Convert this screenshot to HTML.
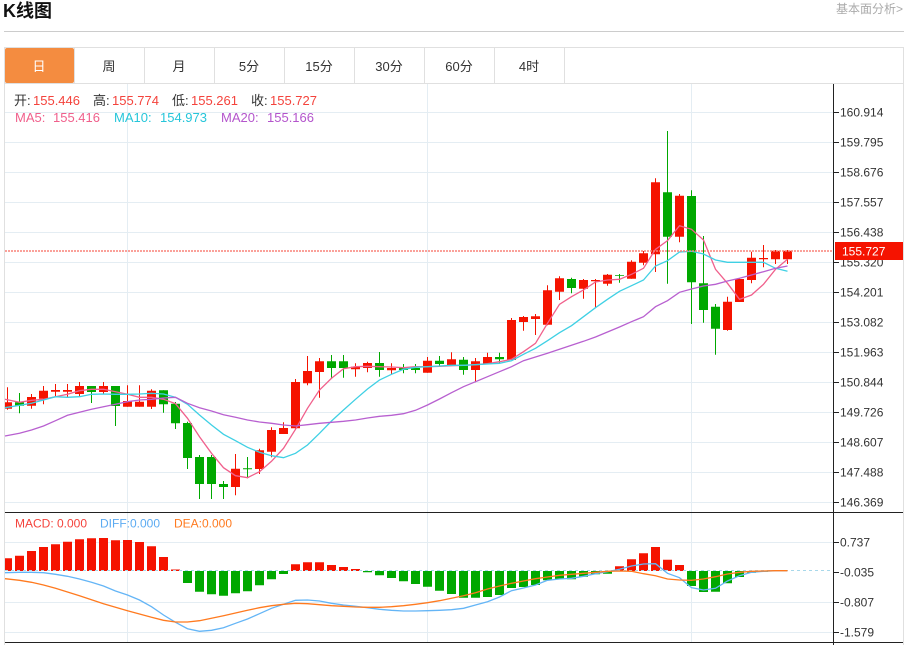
<!DOCTYPE html>
<html><head><meta charset="utf-8"><title>K线图</title>
<style>
html,body{margin:0;padding:0;background:#fff;width:909px;height:645px;overflow:hidden}
svg{display:block}
text{font-family:"Liberation Sans","Noto Sans CJK SC",sans-serif}
</style></head><body>
<svg width="909" height="645" viewBox="0 0 909 645" xmlns="http://www.w3.org/2000/svg">
<rect width="909" height="645" fill="#fff"/>
<text x="3" y="17" font-size="18" font-weight="bold" fill="#111">K线图</text>
<text x="903" y="13" font-size="12" fill="#aaa" text-anchor="end">基本面分析&gt;</text>
<path d="M4 31.5H904" stroke="#ccc" fill="none"/>
<!-- tabs -->
<path d="M4.5 47.5H903.5M4.5 83.5H903.5M4.5 47V645M903.5 47V645" stroke="#e0e0e0" fill="none"/>
<rect x="5" y="48" width="69" height="35" rx="2" fill="#f48c40"/>
<path d="M74.5 48V83M144.5 48V83M214.5 48V83M284.5 48V83M354.5 48V83M424.5 48V83M494.5 48V83M564.5 48V83" stroke="#e0e0e0" fill="none"/>
<g font-size="13" fill="#333" text-anchor="middle">
<text x="39" y="71" fill="#fff">日</text>
<text x="109" y="71">周</text>
<text x="179" y="71">月</text>
<text x="249" y="71">5分</text>
<text x="319" y="71">15分</text>
<text x="389" y="71">30分</text>
<text x="459" y="71">60分</text>
<text x="529" y="71">4时</text>
</g>
<!-- grid -->
<path d="M5 112.5H833M5 142.5H833M5 172.5H833M5 202.5H833M5 232.5H833M5 262.5H833M5 292.5H833M5 322.5H833M5 352.5H833M5 382.5H833M5 412.5H833M5 442.5H833M5 472.5H833M5 502.5H833M5 542.5H833M5 602.5H833M5 632.5H833M127.5 84V642M427.5 84V642M691.5 84V642" stroke="#e4edf3" fill="none"/>
<!-- wicks -->
<path fill="none" stroke="#f51300" stroke-width="1" d="M7.5 387.3V409.7M31.5 394V408.7M43.5 386V404.3M55.5 384V396.7M67.5 384V397.3M79.5 382V396.7M103.5 382V394M127.5 385.3V406.7M139.5 385.3V406.7M151.5 389.3V409M235.5 454V495.3M259.5 448.7V474M271.5 427.3V457.3M283.5 422.3V434M295.5 379V430M307.5 356V385.3M319.5 358V397.7M355.5 363.3V376.7M367.5 361.7V372.3M391.5 363.3V374M427.5 357V372.7M451.5 352.3V366M475.5 358V382.3M487.5 352.7V364M511.5 318V360M523.5 316V330.7M535.5 314V335M547.5 285.3V325.3M559.5 276.3V300M583.5 279V298.7M595.5 279V308M607.5 274V285.7M631.5 260.3V278.7M643.5 251V265.3M655.5 178.3V272M679.5 194V242.3M727.5 296.7V330.7M739.5 278V302M751.5 251.7V283.3M763.5 245V267.3M775.5 250V264M787.5 250V264"/>
<path fill="none" stroke="#00a800" stroke-width="1" d="M19.5 393V413.3M91.5 386V403M115.5 386V426M163.5 390.3V412.7M175.5 402V429M187.5 421.7V469M199.5 455V499M211.5 455V499M223.5 481V499M247.5 457V478.3M331.5 355V377.7M343.5 355V377.7M379.5 352V376.7M403.5 364V373.3M415.5 364V373.3M439.5 356V365.7M463.5 357V374.7M499.5 352.7V363.3M571.5 277.7V293.3M619.5 274V282.7M667.5 131V283.7M691.5 190.3V324M703.5 236V322.7M715.5 304V354.7"/>
<!-- bodies -->
<path fill="#f51300" d="M5 402.3h7v6.4h-7zM27 397h9v8.7h-9zM39 390.7h9v8h-9zM51 390h9v1.7h-9zM63 390h9v1.7h-9zM75 386h9v8h-9zM99 386h9v6h-9zM123 401h9v5.7h-9zM135 401.7h9v5h-9zM147 390.7h9v16h-9zM231 468.7h9v18.3h-9zM255 450.3h9v18.7h-9zM267 430h9v21.7h-9zM279 428h9v6h-9zM291 382h9v46.3h-9zM303 371h9v12.3h-9zM315 361.3h9v10.7h-9zM351 366.7h9v2.6h-9zM363 363h9v5h-9zM387 368h9v2.3h-9zM423 360.7h9v12h-9zM447 359.3h9v5.7h-9zM471 361.3h9v8.7h-9zM483 357h9v7h-9zM507 320h9v40h-9zM519 317h9v5h-9zM531 316.3h9v2.7h-9zM543 290.3h9v34.4h-9zM555 278.3h9v13.4h-9zM579 280h9v8.7h-9zM591 280h9v1.3h-9zM603 274.7h9v9h-9zM627 261.7h9v17h-9zM639 253.3h9v9.4h-9zM651 182.3h9v72h-9zM675 195.7h9v41h-9zM723 301.7h9v28.3h-9zM735 279h9v23h-9zM747 257.7h9v22.3h-9zM759 258h9v1.3h-9zM771 250.7h9v8.6h-9zM783 250.7h9v8.6h-9z"/>
<path fill="#00a800" d="M15 402.3h9v3.4h-9zM87 386h9v6h-9zM111 386h9v20h-9zM159 390.3h9v14h-9zM171 403.7h9v19.6h-9zM183 423h9v35h-9zM195 457h9v27h-9zM207 457h9v27h-9zM219 484h9v3h-9zM243 468.3h9v1h-9zM327 361.3h9v6.7h-9zM339 361.3h9v6.7h-9zM375 363h9v7h-9zM399 368h9v2h-9zM411 368h9v2h-9zM435 360.7h9v3.3h-9zM459 359.7h9v10.3h-9zM495 357h9v2.3h-9zM567 279h9v9h-9zM615 275h9v.7h-9zM663 192.3h9v44.4h-9zM687 196h9v86.3h-9zM699 283.3h9v26.7h-9zM711 306.7h9v22h-9z"/>
<!-- MA -->
<polyline fill="none" stroke="#f0608c" stroke-width="1.3" points="5,399.3 19.5,402.3 31.5,400.3 43.5,399.3 55.5,396.7 67.5,394.3 79.5,390.7 91.5,389.3 103.5,389.3 115.5,391.7 127.5,394.3 139.5,397.3 151.5,397.3 163.5,399.3 175.5,403.7 187.5,418.3 199.5,436.7 211.5,453.3 223.5,467.7 235.5,475.7 247.5,477.7 259.5,471.7 271.5,461.3 283.5,448.3 295.5,429.3 307.5,408.3 319.5,390 331.5,378.3 343.5,368.7 355.5,366.7 367.5,366.3 379.5,366.7 391.5,367 403.5,367.7 415.5,366.7 427.5,366.7 439.5,366.3 451.5,365.7 463.5,365.3 475.5,364.7 487.5,363.7 499.5,361.7 511.5,359.3 523.5,351.7 535.5,343.3 547.5,323.3 559.5,304.3 571.5,296.7 583.5,290 595.5,282 607.5,280 619.5,279.3 631.5,274.3 643.5,268.3 655.5,249.3 667.5,240.7 679.5,225.7 691.5,229.3 703.5,240 715.5,269.3 727.5,283.3 739.5,299.3 751.5,295 763.5,284.3 775.5,269.3 787.5,259.3"/>
<polyline fill="none" stroke="#3fd0e4" stroke-width="1.3" points="5,407.7 19.5,405.3 31.5,403.3 43.5,400 55.5,396.7 67.5,397.3 79.5,396.7 91.5,394.3 103.5,394 115.5,394.3 127.5,394.3 139.5,394 151.5,393.3 163.5,394 175.5,397.3 187.5,404.3 199.5,415 211.5,425 223.5,434.3 235.5,440.7 247.5,447.3 259.5,452.3 271.5,455.7 283.5,457.7 295.5,453.3 307.5,445 319.5,433.3 331.5,421 343.5,410 355.5,399.3 367.5,389 379.5,380 391.5,374.3 403.5,369.3 415.5,367.3 427.5,366.7 439.5,366 451.5,365.3 463.5,365.3 475.5,364.7 487.5,364 499.5,363.3 511.5,360.7 523.5,354.3 535.5,348.3 547.5,340.7 559.5,332.7 571.5,325.7 583.5,316.7 595.5,307.7 607.5,299.3 619.5,291.3 631.5,285.7 643.5,280 655.5,266 667.5,260.7 679.5,252 691.5,251.3 703.5,254 715.5,260 727.5,262.3 739.5,262.3 751.5,262.3 763.5,262.3 775.5,268.3 787.5,271.3"/>
<polyline fill="none" stroke="#b860d0" stroke-width="1.3" points="5,436 19.5,433.3 31.5,430 43.5,426 55.5,420.7 67.5,415.3 79.5,412.3 91.5,409.3 103.5,406.7 115.5,404.3 127.5,401.7 139.5,400 151.5,399.3 163.5,398 175.5,397.3 187.5,403.3 199.5,407.7 211.5,411 223.5,414.7 235.5,417.3 247.5,420 259.5,422 271.5,423.3 283.5,425 295.5,426 307.5,424.7 319.5,423.3 331.5,422.3 343.5,421.3 355.5,420 367.5,418 379.5,416.3 391.5,415.3 403.5,413.7 415.5,410.3 427.5,405 439.5,399 451.5,392.7 463.5,386.7 475.5,381.7 487.5,376.7 499.5,371.7 511.5,366.7 523.5,360.7 535.5,357 547.5,353.3 559.5,349.3 571.5,345.3 583.5,341.3 595.5,337 607.5,332 619.5,327 631.5,321.7 643.5,316.7 655.5,306.7 667.5,300.7 679.5,292.3 691.5,289 703.5,286 715.5,284.3 727.5,281 739.5,278.3 751.5,275 763.5,271.7 775.5,268.3 787.5,266"/>
<!-- price line -->
<path d="M5 251H833" stroke="#f88278" stroke-width="1.6" stroke-dasharray="2 1" fill="none"/>
<!-- MACD bars -->
<path fill="#f51300" d="M5 558.3h7V571h-7zM15 555.7h9V571h-9zM27 551h9v20h-9zM39 547h9v24h-9zM51 544.3h9V571h-9zM63 541.7h9V571h-9zM75 539.3h9V571h-9zM87 538.3h9V571h-9zM99 538h9v33h-9zM111 540.3h9V571h-9zM123 540h9v31h-9zM135 542h9v29h-9zM147 546.3h9V571h-9zM159 557h9v14h-9zM171 569.5h9v1.5h-9zM291 564.3h9V571h-9zM303 562.3h9V571h-9zM315 562.3h9V571h-9zM327 565h9v6h-9zM339 567h9v4h-9zM351 569h9v2h-9zM615 566.3h9V571h-9zM627 559.3h9V571h-9zM639 553.3h9V571h-9zM651 547h9v24h-9zM663 559.7h9V571h-9zM675 565h9v6h-9z"/>
<path fill="#00a800" d="M183 571h9v12h-9zM195 571h9v20.7h-9zM207 571h9v23.3h-9zM219 571h9v24.7h-9zM231 571h9v22.3h-9zM243 571h9v20.3h-9zM255 571h9v14.3h-9zM267 571h9v8.3h-9zM279 571h9v3h-9zM363 571h9v1.3h-9zM375 571h9v4.3h-9zM387 571h9v7h-9zM399 571h9v10.3h-9zM411 571h9v13h-9zM423 571h9v15.7h-9zM435 571h9v19.7h-9zM447 571h9v23h-9zM459 571h9v26.7h-9zM471 571h9v26.7h-9zM483 571h9v26h-9zM495 571h9v24h-9zM507 571h9v17h-9zM519 571h9v16h-9zM531 571h9v14h-9zM543 571h9v9.3h-9zM555 571h9v8h-9zM567 571h9v8.3h-9zM579 571h9v5.7h-9zM591 571h9v3.3h-9zM603 571h9v2.7h-9zM687 571h9v15h-9zM699 571h9v21h-9zM711 571h9v20.7h-9zM723 571h9v12.3h-9zM735 571h9v6h-9zM747 571h9v1.7h-9zM759 571h9v.7h-9z"/>
<path d="M5 570.5H833" stroke="#a8d8ea" stroke-dasharray="3 3" fill="none"/>
<polyline fill="none" stroke="#64b5f6" stroke-width="1.3" points="5,572.7 19.5,572.3 31.5,572.3 43.5,572.7 55.5,574.3 67.5,576.3 79.5,579 91.5,582.3 103.5,586 115.5,591 127.5,595 139.5,600 151.5,606.7 163.5,615 175.5,622.3 187.5,628.7 199.5,631.3 211.5,630.3 223.5,627.7 235.5,623.3 247.5,619 259.5,613.7 271.5,608.3 283.5,604.3 295.5,600.3 307.5,600 319.5,601 331.5,603.3 343.5,605 355.5,606.3 367.5,607.7 379.5,609.3 391.5,610.3 403.5,611 415.5,611 427.5,610.7 439.5,610.3 451.5,609.7 463.5,608.3 475.5,605 487.5,601.7 499.5,597 511.5,590.7 523.5,588 535.5,585 547.5,580.3 559.5,579 571.5,578.3 583.5,576.3 595.5,573.7 607.5,571.7 619.5,569.3 631.5,566 643.5,564 655.5,563.7 667.5,573.3 679.5,577.7 691.5,587.7 703.5,590 715.5,588.3 727.5,581 739.5,575.7 751.5,572.3 763.5,571.3 775.5,570.7 787.5,570.7"/>
<polyline fill="none" stroke="#ff7a1f" stroke-width="1.3" points="5,578.7 19.5,580.3 31.5,582.3 43.5,585 55.5,588.3 67.5,592 79.5,595.7 91.5,599.7 103.5,603.7 115.5,607.3 127.5,610.7 139.5,614 151.5,617.3 163.5,620.3 175.5,622 187.5,622 199.5,620.7 211.5,618.3 223.5,615.7 235.5,613 247.5,610.3 259.5,607.7 271.5,605.7 283.5,604.3 295.5,603.3 307.5,603.7 319.5,604.7 331.5,605.7 343.5,606.3 355.5,607 367.5,607.3 379.5,607.3 391.5,606.7 403.5,605.7 415.5,604.3 427.5,602.7 439.5,600.7 451.5,598.3 463.5,595.7 475.5,592.7 487.5,589 499.5,586 511.5,583.3 523.5,581 535.5,578.7 547.5,577 559.5,575.3 571.5,574.3 583.5,573.3 595.5,572.3 607.5,571.3 619.5,571 631.5,571.3 643.5,573.7 655.5,575.7 667.5,579 679.5,580 691.5,580.3 703.5,579 715.5,576.7 727.5,574 739.5,572.3 751.5,571.3 763.5,571 775.5,570.7 787.5,570.7"/>
<!-- axes -->
<path d="M5 512.5H903M5 642.5H903M833.5 84V645" stroke="#222" fill="none"/>
<path d="M834 112.5h5M834 142.5h5M834 172.5h5M834 202.5h5M834 232.5h5M834 262.5h5M834 292.5h5M834 322.5h5M834 352.5h5M834 382.5h5M834 412.5h5M834 442.5h5M834 472.5h5M834 502.5h5M834 542.5h5M834 572.5h5M834 602.5h5M834 632.5h5" stroke="#222" fill="none"/>
<g font-size="12" fill="#333">
<text x="840" y="116.500">160.914</text>
<text x="840" y="146.500">159.795</text>
<text x="840" y="176.500">158.676</text>
<text x="840" y="206.500">157.557</text>
<text x="840" y="236.500">156.438</text>
<text x="840" y="266.500">155.320</text>
<text x="840" y="296.500">154.201</text>
<text x="840" y="326.500">153.082</text>
<text x="840" y="356.500">151.963</text>
<text x="840" y="386.500">150.844</text>
<text x="840" y="416.500">149.726</text>
<text x="840" y="446.500">148.607</text>
<text x="840" y="476.500">147.488</text>
<text x="840" y="506.500">146.369</text>
<text x="840" y="546.500">0.737</text>
<text x="840" y="576.500">-0.035</text>
<text x="840" y="606.500">-0.807</text>
<text x="840" y="636.500">-1.579</text>
</g>
<rect x="835" y="242" width="68" height="18" fill="#f51300"/>
<text x="842" y="255.500" font-size="12" fill="#fff">155.727</text>
<!-- legends -->
<g font-size="13">
<text x="14" y="105" fill="#333">开:</text><text x="33" y="105" fill="#f4433c">155.446</text>
<text x="93" y="105" fill="#333">高:</text><text x="112" y="105" fill="#f4433c">155.774</text>
<text x="172" y="105" fill="#333">低:</text><text x="191" y="105" fill="#f4433c">155.261</text>
<text x="251" y="105" fill="#333">收:</text><text x="270" y="105" fill="#f4433c">155.727</text>
<text x="15" y="122" fill="#f0608c">MA5:</text><text x="53" y="122" fill="#f0608c">155.416</text>
<text x="114" y="122" fill="#26c6da">MA10:</text><text x="160" y="122" fill="#26c6da">154.973</text>
<text x="221" y="122" fill="#b455cc">MA20:</text><text x="267" y="122" fill="#b455cc">155.166</text>
</g>
<g font-size="12">
<text x="15" y="527.500" fill="#f4433c">MACD:</text><text x="57" y="527.500" fill="#f4433c">0.000</text>
<text x="100" y="527.500" fill="#5cabf2">DIFF:</text><text x="130" y="527.500" fill="#5cabf2">0.000</text>
<text x="174" y="527.500" fill="#ff7a1f">DEA:</text><text x="202" y="527.500" fill="#ff7a1f">0.000</text>
</g>
</svg>
</body></html>
